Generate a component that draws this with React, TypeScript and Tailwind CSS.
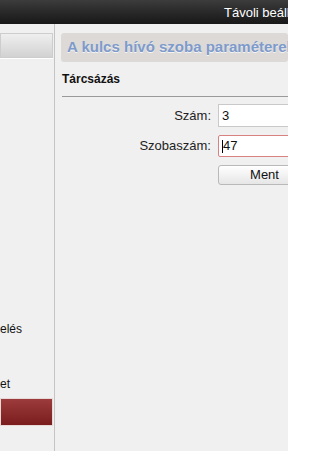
import React from "react";

export default function App() {
  const font = { fontFamily: '"Liberation Sans", Arial, sans-serif' };
  return (
    <div className="w-[288px] h-[451px] overflow-hidden bg-[#f0f0f0] flex flex-col" style={font}>
      <div className="h-[24px] shrink-0 bg-gradient-to-b from-[#3c3c3c] to-[#181818] flex items-center overflow-hidden">
        <span className="pl-[224px] whitespace-nowrap text-white text-[13px] leading-none">Távoli beállítások</span>
      </div>
      <div className="flex flex-1 min-h-0">
        <div className="w-[55px] shrink-0 border-r border-[#c4c4c4] flex flex-col overflow-hidden">
          <div className="mt-[9px] h-[25px] w-[53px] border border-[#cdcdcd] bg-gradient-to-b from-[#efefef] to-[#d2d2d2] shadow-[0_1px_0_#ffffff]"></div>
          <div className="mt-[264px] h-[14px] flex items-center text-[12px] text-[#111] whitespace-nowrap">elés</div>
          <div className="mt-[41px] h-[14px] flex items-center text-[12px] text-[#111] whitespace-nowrap">et</div>
          <div className="mt-[7px] h-[28px] w-[53px] border border-[#e8d8d8] bg-gradient-to-b from-[#9c3b3b] to-[#7a1c1e]"></div>
        </div>
        <div className="flex-1 min-w-0 overflow-hidden">
          <div className="ml-[6px] mt-[9px] h-[29px] rounded-[3px] bg-[#dcd9d6] flex items-center pl-[6px] overflow-hidden">
            <span className="whitespace-nowrap font-bold text-[15px] text-[#7d9acb] [text-shadow:0_1px_0_#f4f4f4]">A kulcs hívó szoba paraméterek</span>
          </div>
          <div className="ml-[7px] mt-[10px] text-[12px] font-bold text-[#111] leading-[14px]">Tárcsázás</div>
          <div className="ml-[7px] mt-[10px] h-[2px] border-t border-[#9a9a9a] border-b-white"></div>
          <div className="mt-[6px] flex flex-col gap-[8px]">
            <div className="flex items-center">
              <span className="w-[156px] shrink-0 text-right text-[13px] text-[#222]">Szám:</span>
              <div className="ml-[7px] h-[23px] w-[120px] shrink-0 bg-white border border-[#c9c9c9] flex items-center pl-[3px] text-[13px] text-[#111]">3</div>
            </div>
            <div className="flex items-center">
              <span className="w-[156px] shrink-0 text-right text-[13px] text-[#222]">Szobaszám:</span>
              <div className="ml-[7px] h-[22px] w-[120px] shrink-0 bg-white border border-[#d98080] rounded-[2px] flex items-center pl-[3px] text-[13px] text-[#111]">
                <span className="w-px h-[13px] bg-black"></span>47
              </div>
            </div>
            <div className="flex items-center">
              <span className="w-[156px] shrink-0"></span>
              <div className="ml-[7px] h-[20px] w-[93px] shrink-0 rounded-[3px] border border-[#b9b9b9] bg-gradient-to-b from-white to-[#e6e6e6] flex items-center justify-center text-[13px] text-[#111]">Ment</div>
            </div>
          </div>
        </div>
      </div>
    </div>
  );
}
